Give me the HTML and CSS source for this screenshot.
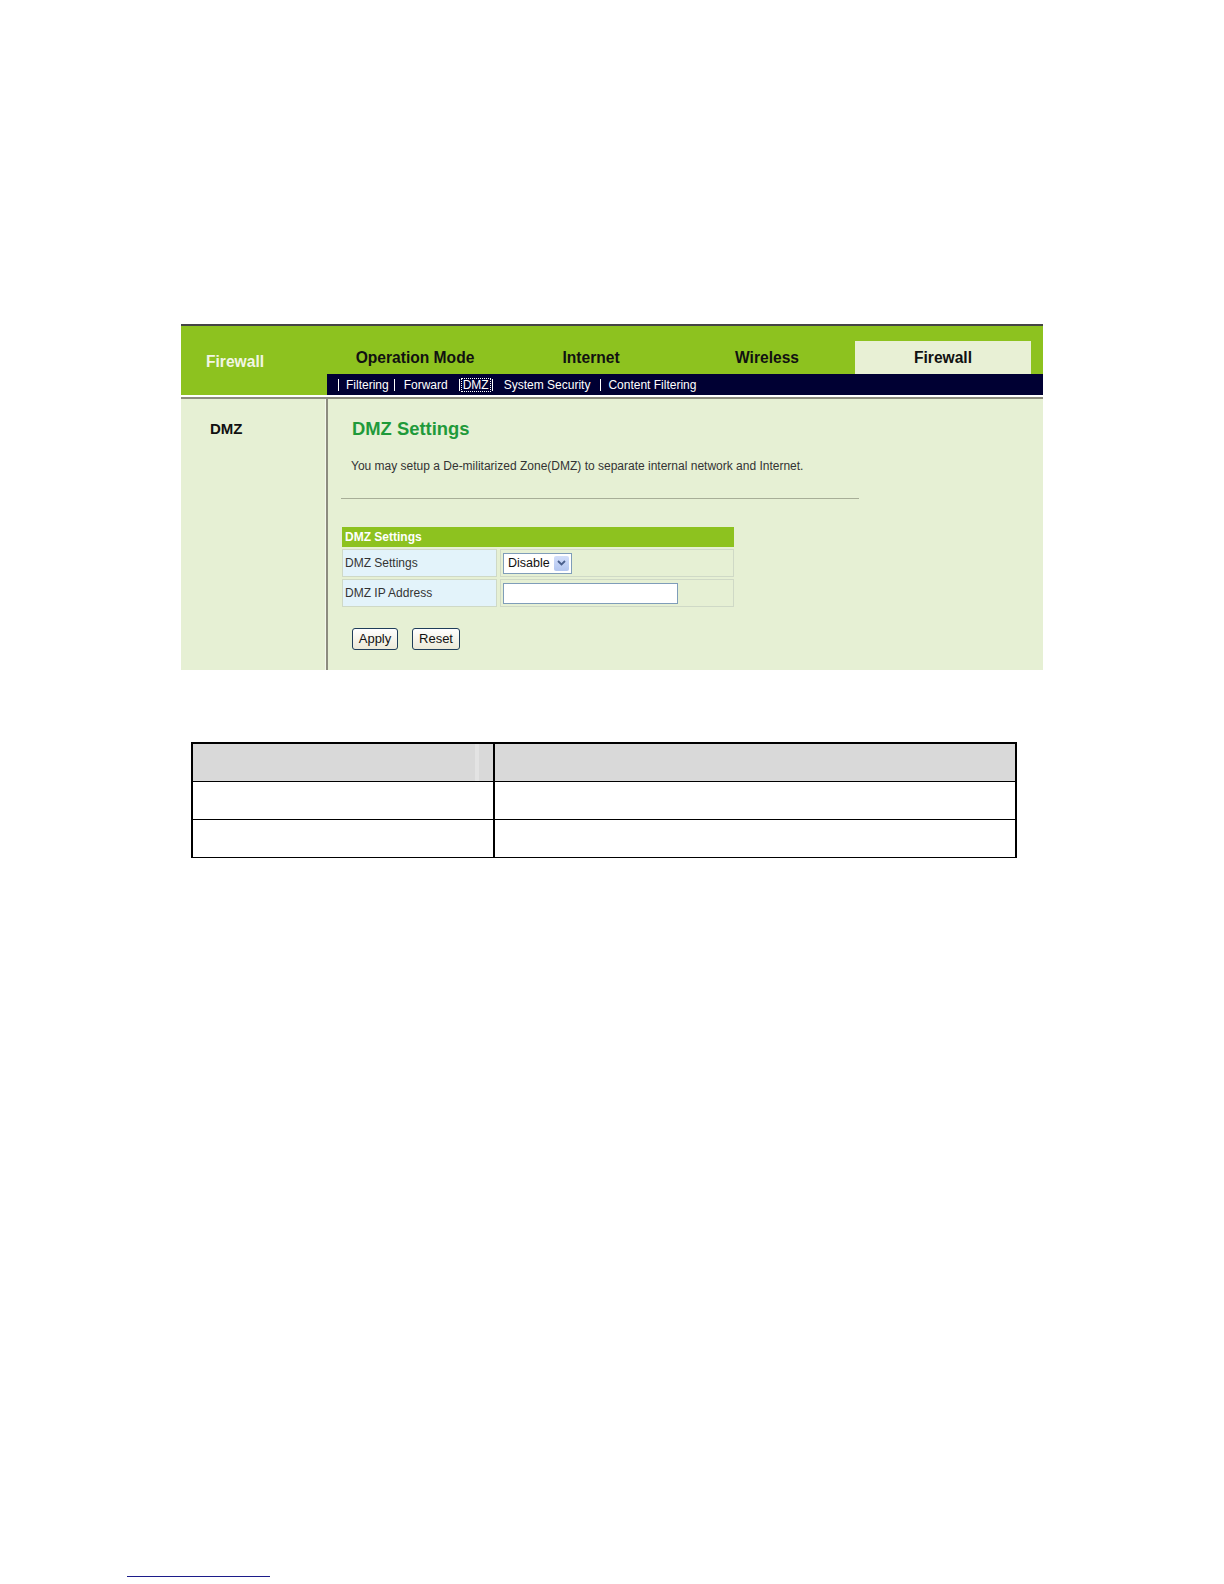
FILE: index.html
```html
<!DOCTYPE html>
<html>
<head>
<meta charset="utf-8">
<title>DMZ Settings</title>
<link rel="stylesheet" href="styles.css">
</head>
<body>
<div class="page">
  <div class="panel">
    <div class="header">
      <div class="brand">Firewall</div>
      <div class="nav">
        <div class="tabs">
          <div class="tab">Operation Mode</div>
          <div class="tab">Internet</div>
          <div class="tab">Wireless</div>
          <div class="tab active">Firewall</div>
        </div>
        <div class="subnav">
          <span class="sep s1"></span>
          <span class="item i1">Filtering</span>
          <span class="sep s2"></span>
          <span class="item i2">Forward</span>
          <span class="sep s3"></span>
          <span class="item current">DMZ</span>
          <span class="sep s4"></span>
          <span class="item i4">System Security</span>
          <span class="sep s5"></span>
          <span class="item i5">Content Filtering</span>
        </div>
      </div>
    </div>
    <div class="divider"></div>
    <div class="body">
      <div class="side">DMZ</div>
      <div class="content">
        <h1 class="title">DMZ Settings</h1>
        <p class="desc">You may setup a De-militarized Zone(DMZ) to separate internal network and Internet.</p>
        <div class="rule"></div>
        <div class="form">
          <div class="form-head">DMZ Settings</div>
          <div class="form-grid">
            <div class="cell label">DMZ Settings</div>
            <div class="cell value">
              <div class="select">
                <span class="select-text">Disable</span>
                <span class="select-btn"><svg width="9" height="6" viewBox="0 0 9 6"><polyline points="1,1 4.5,4.5 8,1" fill="none" stroke="#4a5f8c" stroke-width="1.8"/></svg></span>
              </div>
            </div>
            <div class="cell label">DMZ IP Address</div>
            <div class="cell value">
              <div class="textbox"></div>
            </div>
          </div>
        </div>
        <div class="buttons">
          <span class="btn apply">Apply</span>
          <span class="btn reset">Reset</span>
        </div>
      </div>
    </div>
  </div>

  <table class="doc-table">
    <tr class="head"><td class="c1"></td><td class="c2"></td></tr>
    <tr><td class="c1"></td><td class="c2"></td></tr>
    <tr><td class="c1"></td><td class="c2"></td></tr>
  </table>

  <div class="foot-line"></div>
</div>
</body>
</html>
```

FILE: styles.css
```css
html, body {
  margin: 0;
  padding: 0;
  background: #ffffff;
}

.page {
  padding-top: 324px;
  font-family: "Liberation Sans", Arial, sans-serif;
}

.panel {
  margin-left: 181px;
  width: 862px;
  border-top: 2px solid #444444;
}

.header {
  display: flex;
  height: 69px;
  background: #8dc21f;
}

.brand {
  width: 146px;
  box-sizing: border-box;
  padding: 3px 0 0 25px;
  display: flex;
  align-items: center;
  color: #f2f6e4;
  font-weight: bold;
  font-size: 15.6px;
}

.nav {
  width: 716px;
  display: flex;
  flex-direction: column;
}

.tabs {
  height: 48px;
  display: flex;
  align-items: flex-end;
}

.tab {
  width: 176px;
  height: 33px;
  line-height: 33px;
  text-align: center;
  font-size: 15.6px;
  font-weight: bold;
  color: #111111;
}

.tab.active {
  background: #e8f0d5;
}

.subnav {
  height: 21px;
  background: #000033;
  display: flex;
  align-items: center;
  padding-left: 11px;
  color: #ffffff;
  font-size: 12px;
}

.sep {
  width: 1px;
  height: 12px;
  background: #ffffff;
}

.item {
  line-height: 14px;
}

.i1 { margin-left: 7px; }
.s2 { margin-left: 5px; }
.i2 { margin-left: 9px; }
.s3 { margin-left: 11px; }
.current {
  margin-left: 1px;
  padding: 0 1px;
  border: 1px dotted #ffffff;
  line-height: 12px;
}
.s4 { margin-left: 1px; }
.i4 { margin-left: 11px; }
.s5 { margin-left: 10px; }
.i5 { margin-left: 7px; }

.divider {
  height: 2px;
  background: #ffffff;
  border-bottom: 2px solid #8c8c7e;
}

.body {
  display: flex;
  background: #e6f0d4;
}

.side {
  width: 145px;
  box-sizing: border-box;
  border-right: 1px solid #f4f8ec;
  padding: 21px 0 0 29px;
  font-size: 15px;
  font-weight: bold;
  color: #111111;
}

.content {
  width: 714px;
  border-left: 2px solid #8c8c7e;
  padding-bottom: 20px;
}

.title {
  margin: 19px 0 0 24px;
  font-size: 18.4px;
  line-height: 22px;
  font-weight: bold;
  color: #1f9a3a;
}

.desc {
  margin: 18px 0 0 23px;
  font-size: 12px;
  line-height: 16px;
  color: #333333;
}

.rule {
  margin: 24px 0 0 13px;
  width: 518px;
  border-top: 1px solid #a7ae97;
}

.form {
  margin: 28px 0 0 14px;
  width: 392px;
}

.form-head {
  height: 20px;
  line-height: 20px;
  background: #8dc21f;
  color: #ffffff;
  font-size: 12px;
  font-weight: bold;
  padding-left: 3px;
}

.form-grid {
  margin-top: 2px;
  display: grid;
  grid-template-columns: 155px 1fr;
  column-gap: 3px;
  row-gap: 2px;
}

.cell {
  height: 26px;
  border: 1px solid #cfd9c6;
  display: flex;
  align-items: center;
  font-size: 12px;
  color: #333333;
}

.label {
  background: #e3f3fa;
  padding-left: 2px;
}

.value {
  padding-left: 2px;
}

.select {
  display: flex;
  align-items: center;
  height: 19px;
  width: 67px;
  border: 1px solid #7f9db9;
  background: #ffffff;
}

.select-text {
  flex: 1;
  padding-left: 4px;
  font-size: 12.5px;
  color: #111111;
}

.select-btn {
  width: 15px;
  height: 15px;
  margin-right: 2px;
  border-radius: 2px;
  background: linear-gradient(#d2defa, #b3c6f0);
  display: flex;
  align-items: center;
  justify-content: center;
}

.textbox {
  width: 173px;
  height: 19px;
  border: 1px solid #7f9db9;
  background: #ffffff;
}

.buttons {
  margin: 21px 0 0 24px;
  display: flex;
  gap: 14px;
}

.btn {
  height: 20px;
  line-height: 20px;
  box-sizing: content-box;
  border: 1px solid #1f3d5a;
  border-radius: 3px;
  background: linear-gradient(#ffffff, #ece9d8);
  font-size: 13px;
  color: #111111;
  text-align: center;
}

.apply { width: 44px; }
.reset { width: 46px; }

.doc-table {
  margin: 72px 0 0 191px;
  width: 826px;
  border-collapse: collapse;
}

.doc-table td {
  height: 37px;
  padding: 0;
  border: 1px solid #000000;
  border-left-width: 2px;
  border-right-width: 2px;
}

.doc-table .c1 {
  width: 300px;
}

.doc-table .head td {
  border-top-width: 2px;
  background: #d9d9d9;
}

.doc-table .head .c1 {
  background: linear-gradient(to right, #d9d9d9 282px, #e3e3e3 282px, #e3e3e3 286px, #d9d9d9 286px);
}

.foot-line {
  margin: 718px 0 0 127px;
  width: 143px;
  border-top: 1px solid #1c1c8a;
}
```
